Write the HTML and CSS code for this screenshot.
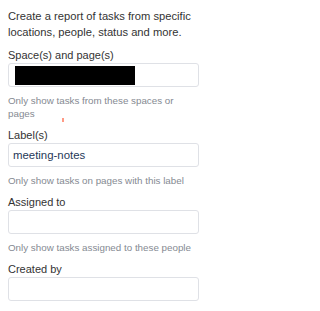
FILE: index.html
```html
<!DOCTYPE html>
<html>
<head>
<meta charset="utf-8">
<link rel="stylesheet" href="styles.css">
</head>
<body>
<div class="panel">
  <p class="intro">Create a report of tasks from specific locations, people, status and more.</p>
  <div class="field">
    <div class="label">Space(s) and page(s)</div>
    <div class="input"><span class="redacted"></span></div>
    <div class="help">Only show tasks from these spaces or pages<span class="tick"></span></div>
  </div>
  <div class="field">
    <div class="label">Label(s)</div>
    <div class="input"><span class="value">meeting-notes</span></div>
    <div class="help">Only show tasks on pages with this label</div>
  </div>
  <div class="field">
    <div class="label">Assigned to</div>
    <div class="input"></div>
    <div class="help">Only show tasks assigned to these people</div>
  </div>
  <div class="field">
    <div class="label">Created by</div>
    <div class="input"></div>
  </div>
</div>
</body>
</html>
```
FILE: styles.css
```css
html, body {
  margin: 0;
  padding: 0;
  background: #ffffff;
}
.panel {
  box-sizing: border-box;
  width: 209px;
  padding: 8px 10px 0 8px;
  font-family: "Liberation Sans", Arial, sans-serif;
  color: #333333;
}
.intro {
  margin: 0 0 8px 0;
  font-size: 11.2px;
  line-height: 16px;
}
.field {
  margin-bottom: 8px;
}
.label {
  font-size: 11px;
  line-height: 15px;
}
.input {
  box-sizing: border-box;
  height: 24px;
  border: 1px solid #dfe1e6;
  border-radius: 3px;
  background: #fff;
  display: flex;
  align-items: center;
  padding: 0 4px;
}
.redacted {
  display: block;
  margin-left: 2px;
  width: 120px;
  height: 19px;
  background: #000;
}
.value {
  font-size: 11.4px;
  color: #253858;
}
.help {
  position: relative;
  margin-top: 7px;
  font-size: 9.8px;
  line-height: 13px;
  color: #858a92;
}
.tick {
  position: absolute;
  left: 54px;
  top: 24px;
  width: 1.5px;
  height: 4px;
  background: #ff9a85;
}
```
